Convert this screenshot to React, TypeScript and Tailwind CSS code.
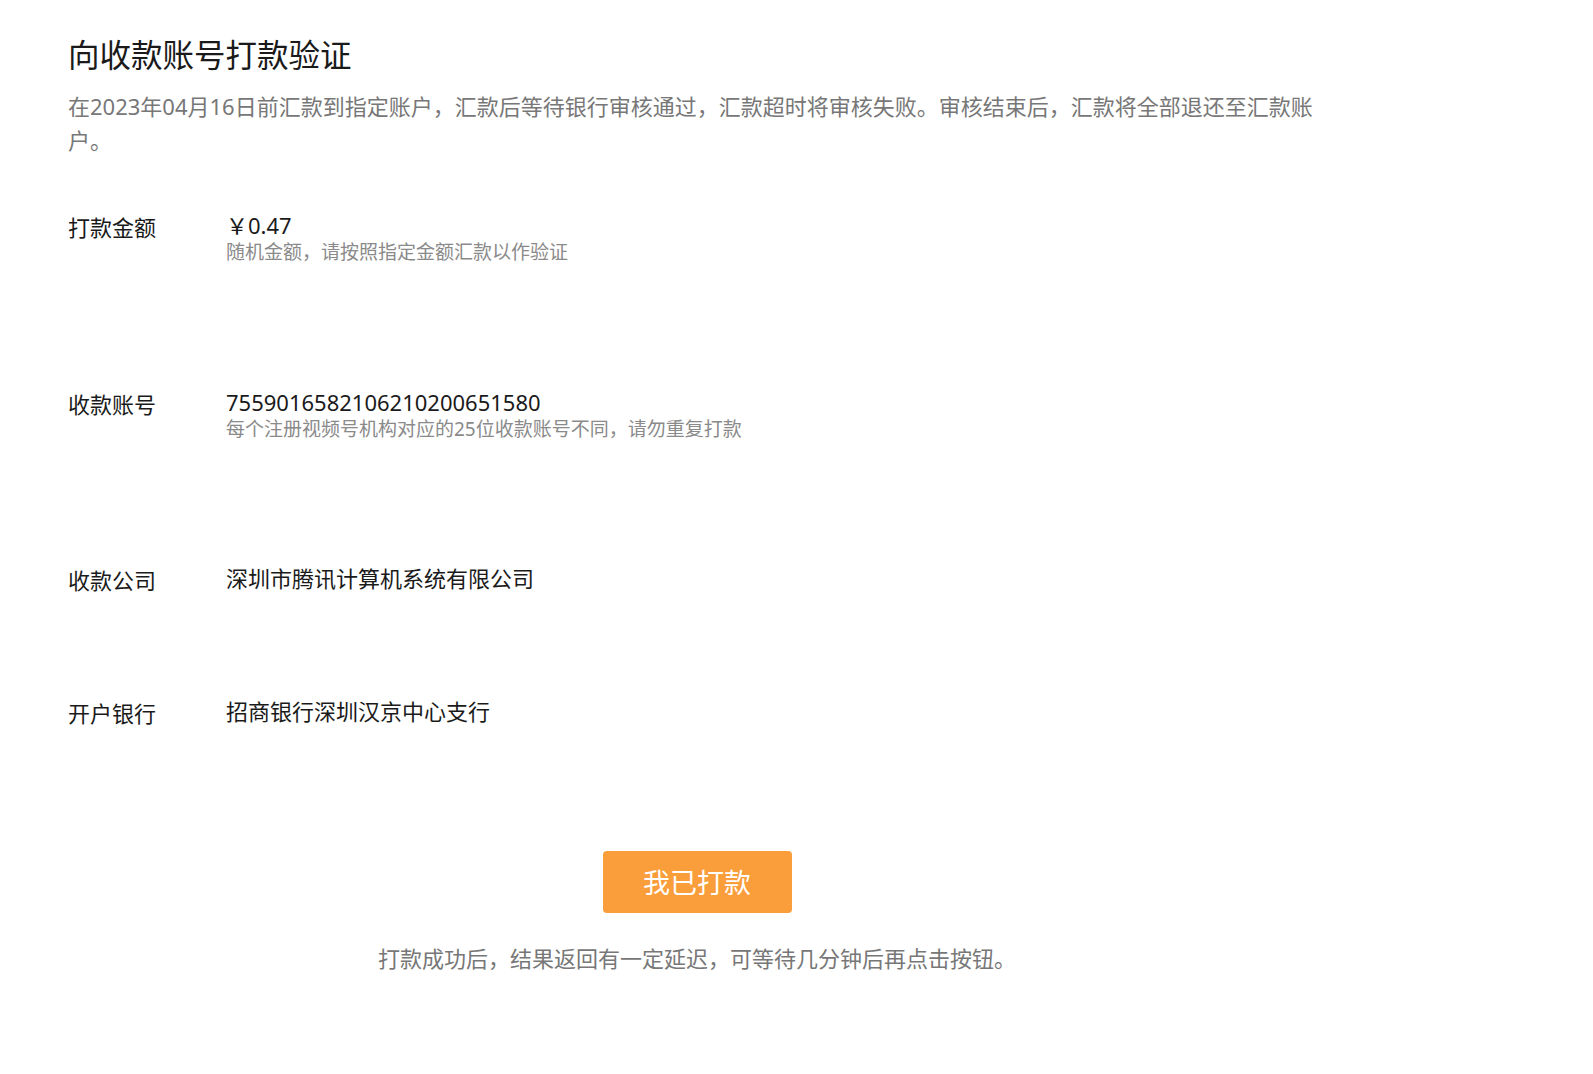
import React from "react";

const font = { fontFamily: '"Noto Sans", "Noto Sans CJK SC", sans-serif' };

function Row({ label, value, sub, h }: { label: string; value: string; sub?: string; h?: string }) {
  return (
    <div className={`flex items-start ${h ?? ""}`}>
      <div className="w-[158px] shrink-0 text-[22px] leading-[32px] text-[#1a1a1a]">{label}</div>
      <div className="flex flex-col">
        <div className="text-[22px] leading-[28px] text-[#1a1a1a]">{value}</div>
        {sub && <div className="text-[19px] leading-[26px] text-[#8a8a8a]">{sub}</div>}
      </div>
    </div>
  );
}

export default function App() {
  return (
    <div className="min-h-screen bg-white" style={font}>
      <div className="ml-[68px] w-[1258px] pt-[35px]">
        <h1 className="text-[31.5px] leading-[40px] text-[#1a1a1a] font-normal">向收款账号打款验证</h1>
        <p className="mt-[14px] text-[22px] leading-[34px] text-[#777777]">
          在2023年04月16日前汇款到指定账户，汇款后等待银行审核通过，汇款超时将审核失败。审核结束后，汇款将全部退还至汇款账户。
        </p>
        <div className="mt-[54px] flex flex-col">
          <Row h="h-[177px]" label="打款金额" value="￥0.47" sub="随机金额，请按照指定金额汇款以作验证" />
          <Row h="h-[176px]" label="收款账号" value="7559016582106210200651580" sub="每个注册视频号机构对应的25位收款账号不同，请勿重复打款" />
          <Row h="h-[133px]" label="收款公司" value="深圳市腾讯计算机系统有限公司" />
          <Row label="开户银行" value="招商银行深圳汉京中心支行" />
        </div>
        <div className="mt-[122px] flex flex-col items-center">
          <button className="w-[189px] h-[62px] rounded-[4px] bg-[#fa9d3b] text-white text-[27px] leading-none">我已打款</button>
          <p className="mt-[30px] text-[22px] leading-[30px] text-[#777777]">打款成功后，结果返回有一定延迟，可等待几分钟后再点击按钮。</p>
        </div>
      </div>
    </div>
  );
}
